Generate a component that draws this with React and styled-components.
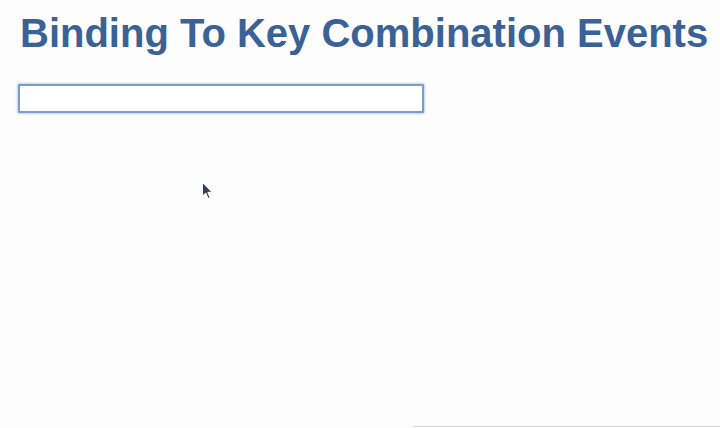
import React from "react";
import styled, { createGlobalStyle } from "styled-components";

const Global = createGlobalStyle`
  html, body { margin: 0; padding: 0; background: #fdfdfe; }
  body { width: 720px; height: 428px; overflow: hidden; font-family: "Liberation Sans", Arial, sans-serif; }
`;

const Page = styled.div`
  position: relative;
  width: 720px;
  height: 428px;
  padding: 10px 18px 0;
  box-sizing: border-box;
  display: flex;
  flex-direction: column;
  gap: 28px;
`;

const Title = styled.h1`
  margin: 0;
  padding-left: 2px;
  font-family: "Liberation Sans", Arial, sans-serif;
  font-weight: bold;
  font-size: 40px;
  line-height: 46px;
  color: #3a6296;
  white-space: nowrap;
`;

const Field = styled.input`
  width: 406px;
  height: 29px;
  box-sizing: border-box;
  border: 2px solid #7d9dc6;
  border-radius: 1px;
  box-shadow: 0 0 2px 1px rgba(120, 160, 215, 0.45);
  background: #ffffff;
  outline: none;
  margin: 0;
  padding: 2px 4px;
  font-family: "Liberation Sans", Arial, sans-serif;
  font-size: 14px;
`;

const Cursor = styled.svg`
  position: absolute;
  left: 201px;
  top: 181px;
`;

const BottomLine = styled.div`
  position: absolute;
  left: 413px;
  right: 0;
  bottom: 1px;
  height: 1px;
  background: #d4d6da;
`;

export default function App() {
  return (
    <>
      <Global />
      <Page>
        <Title>Binding To Key Combination Events</Title>
        <Field type="text" />
        <Cursor width="14" height="20" viewBox="0 0 14 20">
          <path d="M1.5 1.5 L1.5 15 L4.8 12 L7 17.5 L9 16.7 L6.8 11.3 L11 11.3 Z" fill="#2e3f5c" stroke="#ffffff" strokeWidth="1" />
        </Cursor>
        <BottomLine />
      </Page>
    </>
  );
}
